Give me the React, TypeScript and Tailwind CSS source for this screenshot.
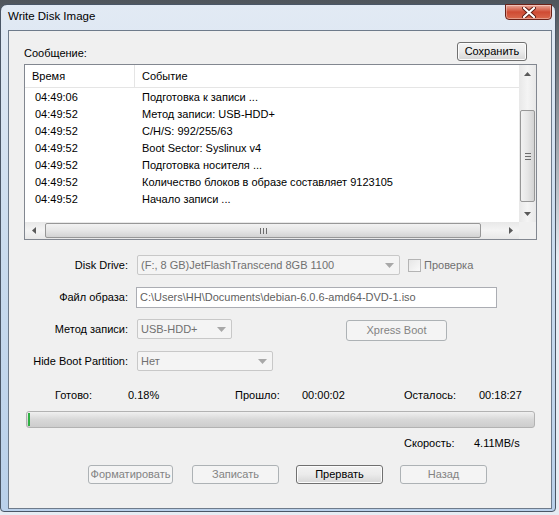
import React from "react";

const rows: [string, string][] = [
  ["04:49:06", "Подготовка к записи ..."],
  ["04:49:52", "Метод записи: USB-HDD+"],
  ["04:49:52", "C/H/S: 992/255/63"],
  ["04:49:52", "Boot Sector: Syslinux v4"],
  ["04:49:52", "Подготовка носителя ..."],
  ["04:49:52", "Количество блоков в образе составляет 9123105"],
  ["04:49:52", "Начало записи ..."],
];

function Arrow({ dir }: { dir: "up" | "down" | "left" | "right" }) {
  const pts =
    dir === "up"
      ? "0,4 3.5,0 7,4"
      : dir === "down"
      ? "0,0 3.5,4 7,0"
      : dir === "left"
      ? "4,0 0,3.5 4,7"
      : "0,0 4,3.5 0,7";
  const w = dir === "up" || dir === "down" ? 7 : 4;
  const h = dir === "up" || dir === "down" ? 4 : 7;
  return (
    <svg width={w} height={h} viewBox={`0 0 ${w} ${h}`}>
      <polygon points={pts} fill="#5a5a5a" />
    </svg>
  );
}

function ComboArrow() {
  return (
    <svg width="9" height="5" viewBox="0 0 9 5">
      <polygon points="0,0 9,0 4.5,5" fill="#a8a8a8" />
    </svg>
  );
}

function Combo({ w, text }: { w: string; text: string }) {
  return (
    <div
      className={`${w} h-[20px] flex items-center border border-[#c8c8c8] rounded-[2px] bg-[#f4f4f4] pl-[3px] pr-[5px]`}
    >
      <span className="flex-1 text-[#707070] whitespace-nowrap overflow-hidden">{text}</span>
      <ComboArrow />
    </div>
  );
}

function Btn({ w, text, enabled }: { w: string; text: string; enabled?: boolean }) {
  return enabled ? (
    <div
      className={`${w} h-[19px] flex items-center justify-center rounded-[3px] border border-[#707070] bg-gradient-to-b from-[#f3f3f3] via-[#ebebeb] to-[#d6d6d6] text-black shadow-[inset_0_0_0_1px_#fcfcfc]`}
    >
      {text}
    </div>
  ) : (
    <div
      className={`${w} h-[19px] flex items-center justify-center rounded-[3px] border border-[#adb2b5] bg-[#f4f4f4] text-[#838383] whitespace-nowrap overflow-hidden`}
    >
      {text}
    </div>
  );
}

export default function App() {
  return (
    <div className="relative w-[559px] h-[515px] overflow-hidden bg-gradient-to-b from-[#4f555c] via-[#e6ecf3] to-[#e6ecf3] font-['Liberation_Sans',Arial,sans-serif] text-[11px] leading-none text-black">
      {/* window */}
      <div className="absolute left-0 top-[4px] w-[556px] h-[508px] rounded-t-[7px] rounded-b-[4px] border border-[#4a5666] bg-gradient-to-b from-[#e2eaf4] via-[#c9dbee] to-[#b9d0ea] flex flex-col">
        {/* title bar */}
        <div className="relative h-[25px] flex items-center pl-[7px]">
          <span className="text-[11.5px] text-black mt-[-2px]">Write Disk Image</span>
          <div className="absolute right-[3px] top-[-1px] w-[47px] h-[16px] rounded-b-[4px] border border-[#6b2218] bg-gradient-to-b from-[#e9a799] via-[#cf4a33] to-[#d9684c] flex items-center justify-center shadow-[inset_0_0_0_1px_rgba(255,255,255,0.35)]">
            <svg width="14" height="11" viewBox="0 0 14 11">
              <path d="M2 1 L12 10 M12 1 L2 10" stroke="#5a1b12" strokeWidth="4" strokeLinecap="round" />
              <path d="M2 1 L12 10 M12 1 L2 10" stroke="#ffffff" strokeWidth="2.2" strokeLinecap="round" />
            </svg>
          </div>
        </div>
        {/* client area */}
        <div className="ml-[7px] mr-[3px] h-[479px] border border-[#6e7b8b] bg-[#f0f0f0] flex flex-col pl-[15px] pr-[14px]">
          {/* top row */}
          <div className="mt-[11px] h-[19px] flex items-center">
            <span className="pt-[3px]">Сообщение:</span>
            <div className="ml-auto mr-[10px]">
              <Btn w="w-[70px]" text="Сохранить" enabled />
            </div>
          </div>
          {/* list view */}
          <div className="mt-[3px] w-[513px] h-[176px] border border-[#828790] bg-white flex flex-col">
            <div className="flex h-[157px]">
              <div className="w-[494px] flex flex-col">
                <div className="h-[23px] flex border-b border-[#e5e5e5]">
                  <div className="w-[110px] border-r border-[#e5e5e5] flex items-center pl-[7px]">Время</div>
                  <div className="flex items-center pl-[7px]">Событие</div>
                </div>
                <div className="pt-[1px] flex flex-col">
                  {rows.map(([t, e], i) => (
                    <div key={i} className="h-[17px] flex items-center whitespace-nowrap">
                      <div className="w-[110px] pl-[10px]">{t}</div>
                      <div className="pl-[7px]">{e}</div>
                    </div>
                  ))}
                </div>
              </div>
              {/* vertical scrollbar */}
              <div className="w-[17px] h-[157px] bg-gradient-to-r from-[#e8e8e8] via-[#f4f4f4] to-[#e8e8e8] flex flex-col items-center">
                <div className="h-[17px] flex items-center justify-center">
                  <Arrow dir="up" />
                </div>
                <div className="mt-[28px] w-[15px] h-[92px] rounded-[2px] border border-[#979797] bg-gradient-to-r from-[#f2f2f2] via-[#e6e6e6] to-[#d3d3d3] flex flex-col items-center justify-center gap-[2px]">
                  <div className="w-[6px] h-[1px] bg-[#6d6d6d]" />
                  <div className="w-[6px] h-[1px] bg-[#6d6d6d]" />
                  <div className="w-[6px] h-[1px] bg-[#6d6d6d]" />
                </div>
                <div className="mt-auto h-[17px] flex items-center justify-center">
                  <Arrow dir="down" />
                </div>
              </div>
            </div>
            <div className="flex h-[17px]">
              {/* horizontal scrollbar */}
              <div className="w-[494px] h-[17px] bg-gradient-to-b from-[#e8e8e8] via-[#f4f4f4] to-[#e8e8e8] flex items-center">
                <div className="w-[17px] flex items-center justify-center">
                  <Arrow dir="left" />
                </div>
                <div className="ml-[3px] w-[436px] h-[15px] rounded-[2px] border border-[#979797] bg-gradient-to-b from-[#f2f2f2] via-[#e6e6e6] to-[#d3d3d3] flex items-center justify-center gap-[2px]">
                  <div className="w-[1px] h-[6px] bg-[#6d6d6d]" />
                  <div className="w-[1px] h-[6px] bg-[#6d6d6d]" />
                  <div className="w-[1px] h-[6px] bg-[#6d6d6d]" />
                </div>
                <div className="ml-auto w-[17px] flex items-center justify-center">
                  <Arrow dir="right" />
                </div>
              </div>
              <div className="w-[17px] h-[17px] bg-[#f0f0f0]" />
            </div>
          </div>

          {/* Disk Drive */}
          <div className="mt-[15px] h-[20px] flex items-center">
            <div className="w-[104px] text-right">Disk Drive:</div>
            <div className="ml-[9px]">
              <Combo w="w-[263px]" text="(F:, 8 GB)JetFlashTranscend 8GB   1100" />
            </div>
            <div className="ml-[8px] w-[13px] h-[13px] border border-[#b4b4b4] bg-gradient-to-br from-[#e6e6e6] to-[#fafafa]" />
            <span className="ml-[3px] text-[#707070]">Проверка</span>
          </div>

          {/* File */}
          <div className="mt-[12px] h-[21px] flex items-center">
            <div className="w-[104px] text-right">Файл образа:</div>
            <div className="ml-[8px] w-[361px] h-[21px] border border-[#abadb3] bg-white flex items-center pl-[3px] text-[#5f5f5f] whitespace-nowrap">
              C:\Users\HH\Documents\debian-6.0.6-amd64-DVD-1.iso
            </div>
          </div>

          {/* Method */}
          <div className="mt-[11px] h-[22px] flex items-start">
            <div className="w-[104px] h-[20px] flex items-center justify-end">Метод записи:</div>
            <div className="ml-[9px]">
              <Combo w="w-[95px]" text="USB-HDD+" />
            </div>
            <div className="ml-[114px] mt-[1px]">
              <Btn w="w-[101px] !h-[21px]" text="Xpress Boot" />
            </div>
          </div>

          {/* Hide Boot Partition */}
          <div className="mt-[10px] h-[20px] flex items-center">
            <div className="w-[104px] text-right whitespace-nowrap">Hide Boot Partition:</div>
            <div className="ml-[9px]">
              <Combo w="w-[136px]" text="Нет" />
            </div>
          </div>

          {/* stats */}
          <div className="mt-[17px] h-[14px] flex items-center whitespace-nowrap">
            <div className="ml-[31px] w-[73px]">Готово:</div>
            <div className="w-[107px]">0.18%</div>
            <div className="w-[67px]">Прошло:</div>
            <div className="w-[102px]">00:00:02</div>
            <div className="w-[75px]">Осталось:</div>
            <div>00:18:27</div>
          </div>

          {/* progress */}
          <div className="mt-[9px] ml-[2px] w-[509px] h-[17px] rounded-[3px] border border-[#b2b2b2] bg-gradient-to-b from-[#f0f0f0] via-[#d8d8d8] to-[#cdcdcd] flex items-stretch p-[1px]">
            <div className="w-[2px] bg-[#2fb044]" />
          </div>

          {/* speed */}
          <div className="mt-[8px] h-[14px] flex items-center whitespace-nowrap">
            <div className="ml-[380px] w-[70px]">Скорость:</div>
            <div>4.11MB/s</div>
          </div>

          {/* buttons */}
          <div className="mt-[15px] h-[19px] flex items-center">
            <div className="ml-[64px]">
              <Btn w="w-[85px]" text="Форматировать" />
            </div>
            <div className="ml-[19px]">
              <Btn w="w-[87px]" text="Записать" />
            </div>
            <div className="ml-[17px]">
              <Btn w="w-[87px]" text="Прервать" enabled />
            </div>
            <div className="ml-[17px]">
              <Btn w="w-[87px]" text="Назад" />
            </div>
          </div>
        </div>
      </div>
    </div>
  );
}
